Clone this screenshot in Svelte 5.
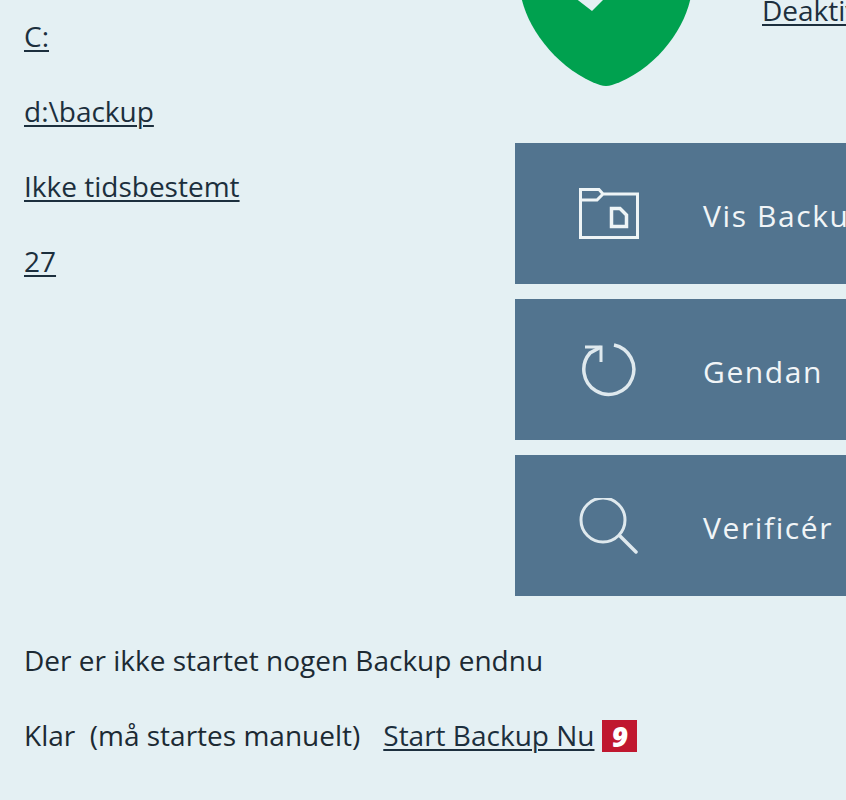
<script lang="ts">
	const links = ['C:', 'd:\\backup', 'Ikke tidsbestemt', '27'];
</script>

<main class="page">
	<div class="top">
		<section class="links">
			{#each links as link}
				<a href="#top">{link}</a>
			{/each}
		</section>

		<section class="side">
			<div class="status">
				<svg class="shield" viewBox="0 0 172 130" width="172" height="130" aria-hidden="true">
					<path
						d="M0 0H172V28C172 62 140 112 92 128Q86 130 80 128C34 112 0 62 0 28Z"
						fill="#00a14f"
					/>
					<path d="M50 37L72 54L95 31V0H50Z" fill="#e4f0f3" />
				</svg>
				<a class="toggle" href="#top">Deaktiver</a>
			</div>

			<div class="buttons">
				<button>
					<svg viewBox="0 0 60 52" width="60" height="52" aria-hidden="true">
						<path
							d="M1.5 1.5H20L24 6H58.5V49.5H1.5ZM1.5 12H18L24 6"
							fill="none"
							stroke="#eef4f6"
							stroke-width="3"
						/>
						<path d="M32.5 20.5H41L47.5 27V38.5H32.5Z" fill="none" stroke="#eef4f6" stroke-width="3.5" />
					</svg>
					<span>Vis Backup</span>
				</button>
				<button>
					<svg viewBox="0 0 60 56" width="60" height="56" aria-hidden="true">
						<path
							d="M35 3A25 25 0 1 1 11 11L22 5"
							fill="none"
							stroke="#dfe9ee"
							stroke-width="3.5"
						/>
						<path d="M6 5H22V20" fill="none" stroke="#dfe9ee" stroke-width="3" />
					</svg>
					<span>Gendan</span>
				</button>
				<button>
					<svg viewBox="0 0 60 56" width="60" height="56" aria-hidden="true">
						<circle cx="24" cy="22" r="22" fill="none" stroke="#dfe9ee" stroke-width="3" />
						<path d="M41 38L57 54" fill="none" stroke="#dfe9ee" stroke-width="3.5" stroke-linecap="round" />
					</svg>
					<span>Verificér</span>
				</button>
			</div>
		</section>
	</div>

	<p class="line">Der er ikke startet nogen Backup endnu</p>
	<p class="line last">
		<span>Klar&nbsp; (må startes manuelt)</span>
		<a href="#top">Start Backup Nu</a>
		<b class="badge">9</b>
	</p>
</main>

<style>
	:global(body) {
		margin: 0;
		background: #e4f0f3;
	}

	.page {
		width: 846px;
		height: 800px;
		overflow: hidden;
		background: #e4f0f3;
		color: #1c2a33;
		font-family: 'Open Sans', 'Noto Sans', sans-serif;
		font-size: 28px;
	}

	a {
		color: #1c2f3d;
		text-decoration: underline;
		text-decoration-thickness: 2px;
		text-underline-offset: 3px;
	}

	.top {
		display: grid;
		grid-template-columns: 515px 331px;
		height: 596px;
	}

	.links {
		display: flex;
		flex-direction: column;
		align-items: flex-start;
		gap: 41px;
		padding: 19px 0 0 24px;
	}

	.links a {
		line-height: 34px;
	}

	.status {
		display: flex;
		align-items: flex-start;
		height: 143px;
		padding-left: 5px;
		box-sizing: border-box;
	}

	.shield {
		margin-top: -43px;
		flex: none;
	}

	.toggle {
		margin: -7px 0 0 70px;
		line-height: 34px;
		white-space: nowrap;
	}

	.buttons {
		display: flex;
		flex-direction: column;
		gap: 15px;
		width: 400px;
	}

	button {
		display: flex;
		align-items: center;
		gap: 64px;
		height: 141px;
		padding: 0 0 0 64px;
		border: 0;
		background: #52748f;
		color: #f1f5f7;
		font: inherit;
		font-size: 30px;
		font-weight: 500;
		letter-spacing: 1.6px;
		text-align: left;
	}

	button span {
		padding-top: 3px;
	}

	button svg {
		flex: none;
	}

	.line {
		margin: 47px 0 0 24px;
		line-height: 34px;
	}

	.last {
		display: flex;
		align-items: center;
		margin-top: 41px;
	}

	.last a {
		margin-left: 23px;
	}

	.badge {
		display: flex;
		align-items: center;
		justify-content: center;
		width: 35px;
		height: 32px;
		margin: 2px 0 0 8px;
		background: #c0182f;
		color: #fff;
		font-style: italic;
		font-size: 28px;
		font-weight: 800;
	}
</style>
